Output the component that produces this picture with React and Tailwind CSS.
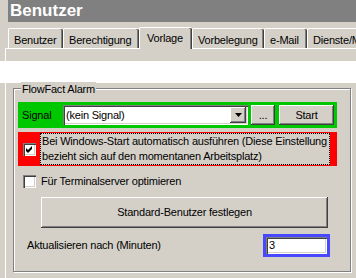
import React from 'react';

const TABS = [
  { label: 'Benutzer', w: 'w-[55px]' },
  { label: 'Berechtigung', w: 'w-[76px]' },
  { label: 'Vorlage', w: 'w-[53px]', active: true },
  { label: 'Vorbelegung', w: 'w-[72px]' },
  { label: 'e-Mail', w: 'w-[43px]' },
  { label: 'Dienste/Module', w: 'w-[90px]' },
];

const raised = 'bg-[#d4d0c8] shadow-[inset_-1px_-1px_0_#404040,inset_1px_1px_0_#fff,inset_-2px_-2px_0_#808080]';
const sunken = 'bg-white shadow-[inset_1px_1px_0_#808080,inset_2px_2px_0_#404040,inset_-1px_-1px_0_#fff,inset_-2px_-2px_0_#d4d0c8]';

function CheckBox({ checked }) {
  return (
    <div className={`w-[13px] h-[13px] shrink-0 flex items-center justify-center ${sunken}`}>
      {checked && (
        <svg width="7" height="7" viewBox="0 0 7 7">
          <path d="M0 2 L2 4 L6 0 L6 3 L2 7 L0 5 Z" fill="#000" />
        </svg>
      )}
    </div>
  );
}

export default function App() {
  return (
    <div className="w-[356px] h-[278px] overflow-hidden bg-[#d4d0c8] font-['Liberation_Sans',Arial,sans-serif] text-[11px] tracking-[-0.2px] text-black">
      {/* Title bar */}
      <div className="flex h-[22px]">
        <div className="w-[8px] bg-[#d4d0c8]" />
        <div className="flex-1 bg-[#808080] pl-[2px] text-white font-bold text-[17px] tracking-normal leading-[22px]">
          Benutzer
        </div>
      </div>

      {/* Tabs */}
      <div className="mt-[5px] flex items-end h-[21px] pl-[8px] whitespace-nowrap">
        {TABS.map(t => (
          <div
            key={t.label}
            className={`${t.w} shrink-0 overflow-hidden rounded-t-[2px] border-t border-l border-white shadow-[inset_-1px_0_0_#404040,inset_-2px_0_0_#808080] ${
              t.active
                ? 'relative z-10 h-[22px] -mb-[1px] bg-[#d4d0c8] pl-[7px] pt-[2px]'
                : 'h-[20px] pl-[5px] pt-[3px]'
            }`}
          >
            {t.label}
          </div>
        ))}
      </div>
      <div className="ml-[5px] h-[13px] border-l border-t border-white" />

      {/* White band */}
      <div className="h-[22px] bg-white" />

      {/* Panel */}
      <div className="ml-[5px] h-[195px] border-l border-white pt-[5px] pl-[7px]">
        <div className="relative w-[338px] h-[184px] border border-[#808080] shadow-[inset_1px_1px_0_#fff,1px_1px_0_#fff]">
          <span className="absolute -top-[7px] left-[7px] px-[1px] bg-[#d4d0c8] leading-[14px]">FlowFact Alarm</span>

          <div className="flex flex-col pl-[4px] pt-[13px]">
            {/* Signal row */}
            <div className="w-[319px] h-[26px] bg-[#00c800] flex items-center pl-[4px]">
              <span className="w-[41px]">Signal</span>
              <div className={`w-[185px] h-[20px] flex items-center pl-[3px] pr-[2px] ${sunken}`}>
                <span className="flex-1">(kein Signal)</span>
                <div className={`w-[16px] h-[16px] flex items-center justify-center ${raised}`}>
                  <svg width="7" height="4" viewBox="0 0 7 4">
                    <path d="M0 0 H7 L3.5 4 Z" fill="#000" />
                  </svg>
                </div>
              </div>
              <div className={`ml-[3px] w-[24px] h-[20px] flex items-center justify-center ${raised}`}>...</div>
              <div className={`ml-[4px] w-[55px] h-[20px] flex items-center justify-center ${raised}`}>Start</div>
            </div>

            {/* Autostart row */}
            <div className="mt-[4px] w-[319px] h-[34px] bg-[#ff0000] flex items-center pl-[5px]">
              <CheckBox checked />
              <div className="ml-[4px] w-[290px] h-[32px] border border-dotted border-black bg-[#d4d0c8] pl-[1px] leading-[15px]">
                Bei Windows-Start automatisch ausführen (Diese Einstellung<br />
                bezieht sich auf den momentanen Arbeitsplatz)
              </div>
            </div>

            {/* Terminalserver */}
            <div className="mt-[9px] h-[13px] flex items-center pl-[5px]">
              <CheckBox />
              <span className="ml-[5px]">Für Terminalserver optimieren</span>
            </div>

            {/* Standard button */}
            <div className={`mt-[9px] ml-[23px] w-[287px] h-[31px] flex items-center justify-center ${raised}`}>
              Standard-Benutzer festlegen
            </div>

            {/* Refresh */}
            <div className="mt-[6px] h-[23px] flex items-center">
              <span className="ml-[9px] w-[236px]">Aktualisieren nach (Minuten)</span>
              <div className="w-[67px] h-[23px] border-[3px] border-[#4848ff]">
                <div className={`h-full pl-[3px] leading-[17px] ${sunken}`}>3</div>
              </div>
            </div>
          </div>
        </div>
      </div>
    </div>
  );
}
